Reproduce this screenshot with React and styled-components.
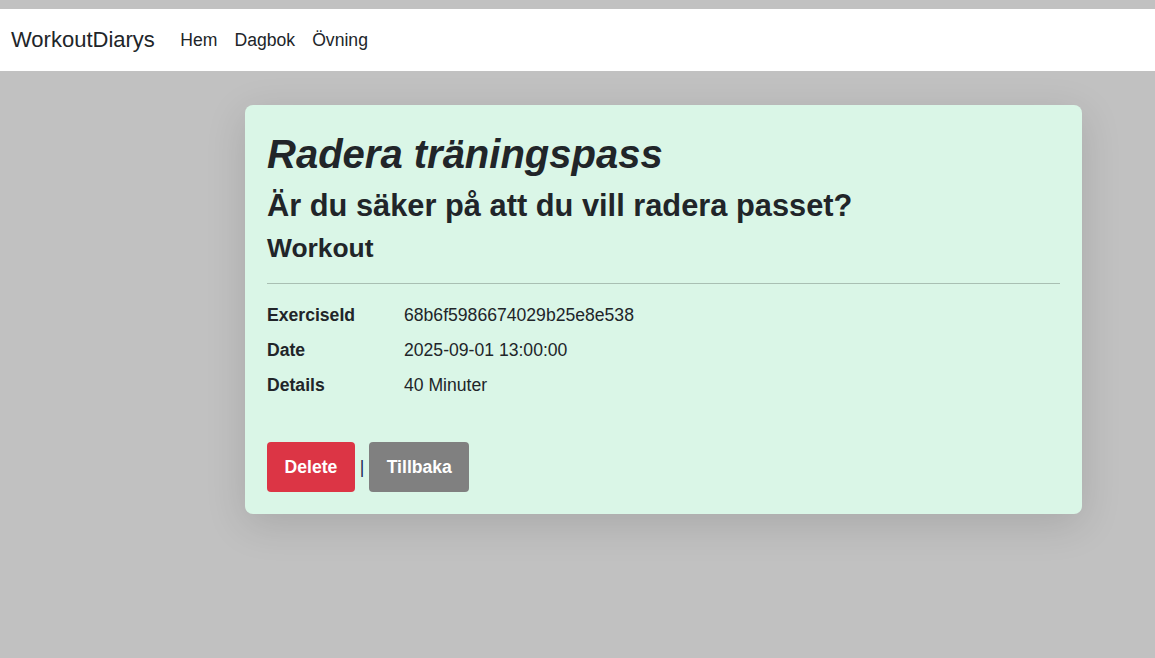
import React from "react";
import styled, { createGlobalStyle } from "styled-components";

const Global = createGlobalStyle`
  html, body {
    margin: 0;
    padding: 0;
    background: #c1c1c1;
    font-family: "Liberation Sans", Arial, sans-serif;
    color: #212529;
  }
  * { box-sizing: border-box; }
`;

const Page = styled.div`
  padding-top: 9px;
  min-height: 658px;
`;

const Navbar = styled.nav`
  height: 62px;
  background: #fff;
  display: flex;
  align-items: center;
  padding: 0 11px;
`;

const Brand = styled.a`
  font-size: 22px;
  color: #212529;
  text-decoration: none;
  margin-right: 17px;
`;

const NavLink = styled.a`
  font-size: 17.6px;
  color: #212529;
  text-decoration: none;
  padding: 0 8.5px;
`;

const Main = styled.main`
  padding: 34px 0 0 245px;
`;

const Card = styled.section`
  width: 837px;
  background: #daf6e7;
  border-radius: 8px;
  padding: 25px 22px 22px;
  box-shadow: 0 10px 40px rgba(0, 0, 0, 0.13);
`;

const Title = styled.h1`
  margin: 0 0 10px;
  font-size: 40px;
  font-style: italic;
  font-weight: 700;
  line-height: 1.2;
`;

const SubTitle = styled.h2`
  margin: 0 0 8px;
  font-size: 30.8px;
  font-weight: 700;
  line-height: 1.2;
`;

const Heading = styled.h4`
  margin: 0;
  font-size: 26.4px;
  font-weight: 700;
  line-height: 1.2;
`;

const Rule = styled.hr`
  border: 0;
  border-top: 1px solid #a9bfb3;
  margin: 18px 0 18px;
`;

const Details = styled.dl`
  display: grid;
  grid-template-columns: 137px 1fr;
  row-gap: 8.6px;
  margin: 0 0 44px;
  font-size: 17.6px;
  line-height: 26.4px;
`;

const Term = styled.dt`
  font-weight: 700;
`;

const Value = styled.dd`
  margin: 0;
`;

const Actions = styled.div`
  display: flex;
  align-items: center;
  font-size: 17.6px;
`;

const Button = styled.button`
  font-family: inherit;
  font-size: 17.6px;
  font-weight: 700;
  line-height: 26px;
  color: #fff;
  border: none;
  border-radius: 4px;
  padding: 12px 17.5px;
  cursor: pointer;
  background: ${({ $variant }) => ($variant === "danger" ? "#dc3545" : "#808080")};
`;

const Sep = styled.span`
  color: #1b2a55;
  white-space: pre;
`;

const rows = [
  ["ExerciseId", "68b6f5986674029b25e8e538"],
  ["Date", "2025-09-01 13:00:00"],
  ["Details", "40 Minuter"],
];

const App = () => {
  return (
    <Page>
      <Global />
      <Navbar>
        <Brand href="#">WorkoutDiarys</Brand>
        <NavLink href="#">Hem</NavLink>
        <NavLink href="#">Dagbok</NavLink>
        <NavLink href="#">Övning</NavLink>
      </Navbar>
      <Main>
        <Card>
          <Title>Radera träningspass</Title>
          <SubTitle>Är du säker på att du vill radera passet?</SubTitle>
          <Heading>Workout</Heading>
          <Rule />
          <Details>
            {rows.map(([k, v]) => (
              <React.Fragment key={k}>
                <Term>{k}</Term>
                <Value>{v}</Value>
              </React.Fragment>
            ))}
          </Details>
          <Actions>
            <Button $variant="danger">Delete</Button>
            <Sep> | </Sep>
            <Button>Tillbaka</Button>
          </Actions>
        </Card>
      </Main>
    </Page>
  );
};

export default App;
